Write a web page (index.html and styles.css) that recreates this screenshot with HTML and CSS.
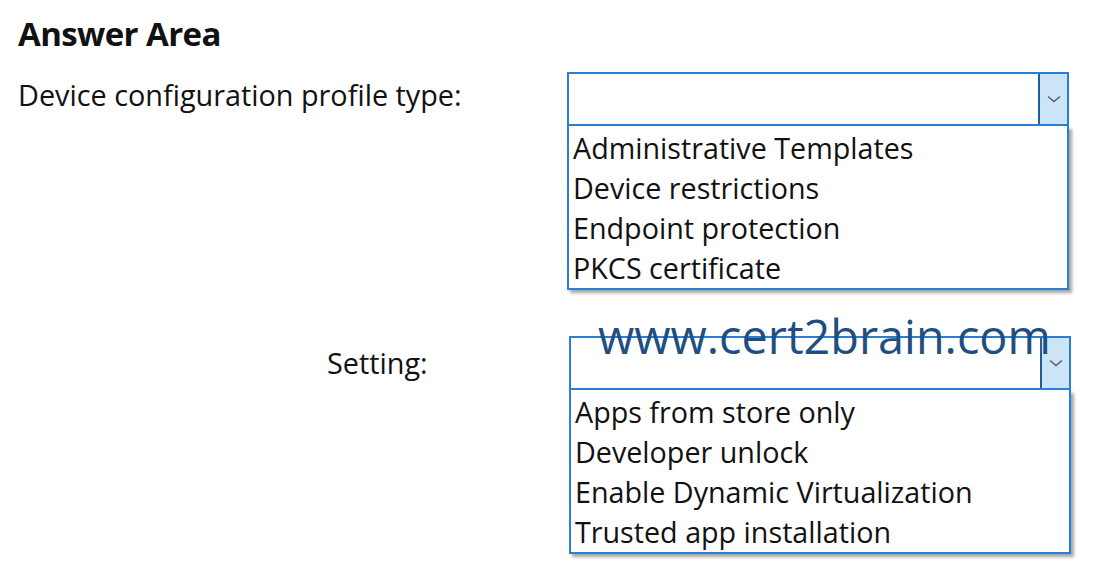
FILE: index.html
```html
<!DOCTYPE html>
<html>
<head>
<meta charset="utf-8">
<link rel="stylesheet" href="styles.css">
</head>
<body>
<div class="page">
  <h1 class="title">Answer Area</h1>
  <div class="row row-first">
    <div class="label label-first">Device configuration profile type:</div>
    <div class="dropdown">
      <div class="select">
        <div class="select-value"></div>
        <div class="select-btn">
          <svg class="chev" width="14" height="8" viewBox="0 0 14 8"><path d="M1 1.5 L7 6.5 L13 1.5" fill="none" stroke="#5a5a5a" stroke-width="1.4"/></svg>
        </div>
      </div>
      <ul class="list">
        <li>Administrative Templates</li>
        <li>Device restrictions</li>
        <li>Endpoint protection</li>
        <li>PKCS certificate</li>
      </ul>
    </div>
  </div>
  <div class="row row-second">
    <div class="label label-second">Setting:</div>
    <div class="dropdown">
      <div class="select">
        <div class="select-value"></div>
        <div class="select-btn">
          <svg class="chev" width="14" height="8" viewBox="0 0 14 8"><path d="M1 1.5 L7 6.5 L13 1.5" fill="none" stroke="#5a5a5a" stroke-width="1.4"/></svg>
        </div>
      </div>
      <ul class="list">
        <li>Apps from store only</li>
        <li>Developer unlock</li>
        <li>Enable Dynamic Virtualization</li>
        <li>Trusted app installation</li>
      </ul>
    </div>
    <div class="watermark">www.cert2brain.com</div>
  </div>
</div>
</body>
</html>
```
FILE: styles.css
```css
html, body {
  margin: 0;
  padding: 0;
  background: #ffffff;
}
body {
  font-family: "Open Sans", Lato, sans-serif;
  color: #111;
  width: 1095px;
  height: 578px;
  overflow: hidden;
}
.page {
  padding: 14px 0 0 18px;
}
.title {
  margin: 0;
  font-size: 33px;
  font-weight: 700;
  line-height: 40px;
  letter-spacing: -0.6px;
}
.row {
  display: flex;
  align-items: flex-start;
  position: relative;
}
.row-first {
  margin-top: 18px;
}
.row-second {
  margin-top: 46px;
}
.label {
  font-size: 28.8px;
  line-height: 54px;
}
.label-first {
  width: 549px;
  line-height: 46px;
}
.label-second {
  width: 242px;
  padding-left: 309px;
}
.dropdown {
  width: 502px;
}
.select {
  display: flex;
  height: 54px;
  box-sizing: border-box;
  border: 2px solid #2a7fd4;
  background: #fff;
}
.select-value {
  flex: 1;
}
.select-btn {
  width: 27px;
  background: #cce4f7;
  border-left: 2px solid #1f5f9e;
  display: flex;
  align-items: center;
  justify-content: center;
}
.chev {
  display: block;
}
.list {
  list-style: none;
  margin: 0;
  padding: 2px 0 0 4px;
  border: 2px solid #2a7fd4;
  border-top: none;
  box-shadow: 3px 3px 3px rgba(0,0,0,0.35);
  background: #fff;
  font-size: 28.7px;
  line-height: 40px;
}
.list li {
  margin: 0;
  white-space: nowrap;
}
.watermark {
  position: absolute;
  left: 580px;
  top: -25px;
  font-size: 46.8px;
  line-height: 50px;
  color: #1f4e80;
  white-space: nowrap;
}
```
